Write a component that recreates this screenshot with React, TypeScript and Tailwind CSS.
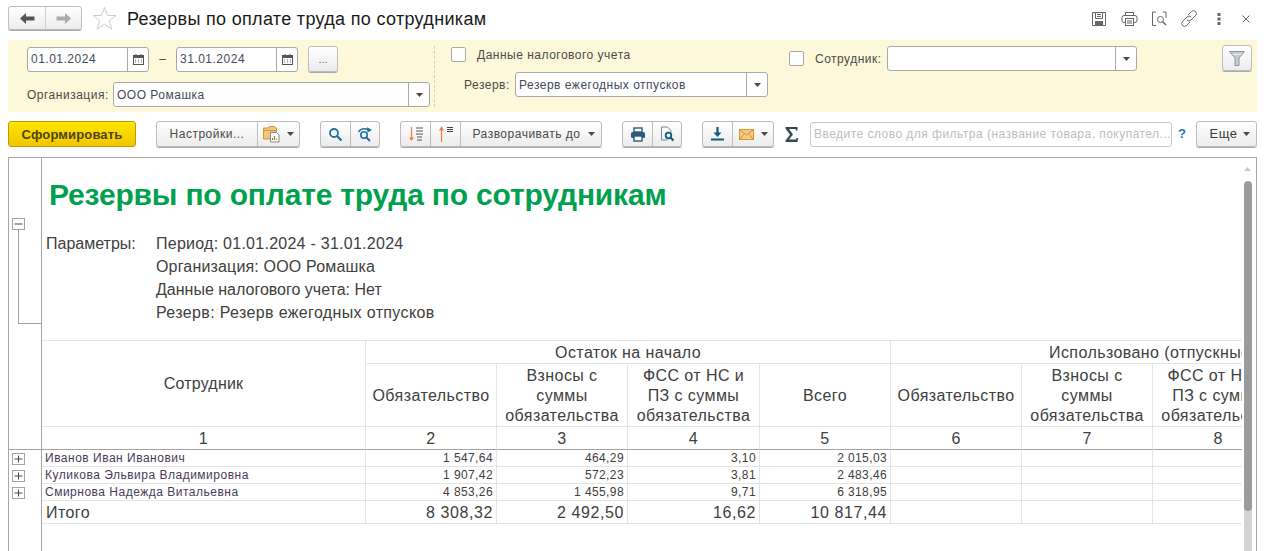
import React from "react";

const F = "[font-family:Liberation_Sans,Arial,sans-serif]";

function Caret() {
  return <svg width="7" height="4" viewBox="0 0 7 4" className="shrink-0"><path d="M0 0h7L3.5 4z" fill="#4a4a4a" /></svg>;
}
function CalIcon() {
  return (
    <svg width="11" height="11" viewBox="0 0 11 11">
      <rect x="0.5" y="1.5" width="10" height="9" fill="#fff" stroke="#555" />
      <rect x="1" y="1" width="9" height="3" fill="#555" />
      <path d="M3 0v2M8 0v2" stroke="#555" />
      <path d="M2 6h1M5 6h1M8 6h1M2 8h1M5 8h1M8 8h1" stroke="#666" />
    </svg>
  );
}
function Field({ w, text, kind, h = "h-[25px]", cls = "" }: { w: string; text?: string; kind: "date" | "select"; h?: string; cls?: string }) {
  return (
    <div className={`${w} ${h} ${cls} flex items-stretch bg-white border border-[#a9a9a9] rounded-[3px] shrink-0`}>
      <div className="flex-1 pl-[3px] flex items-center text-[12px] tracking-[0.5px] text-[#434a5c] whitespace-nowrap overflow-hidden">{text}</div>
      <div className="w-[21px] border-l border-[#a9a9a9] flex items-center justify-center">
        {kind === "date" ? <CalIcon /> : <Caret />}
      </div>
    </div>
  );
}
function Check({ cls = "" }: { cls?: string }) {
  return <div className={`w-[15px] h-[15px] bg-white border border-[#a9a9a9] rounded-[2px] shrink-0 ${cls}`} />;
}
const btn = "bg-gradient-to-b from-white to-[#ececec] border border-[#bdbdbd] rounded-[3px] shadow-[0_1px_0_#a9a9a9]";
function Group({ children, cls = "" }: { children: React.ReactNode; cls?: string }) {
  return <div className={`${btn} h-[26px] flex items-stretch shrink-0 ${cls}`}>{children}</div>;
}
function Seg({ w, children, last, cls = "" }: { w: string; children: React.ReactNode; last?: boolean; cls?: string }) {
  return <div className={`${w} ${cls} flex items-center justify-center gap-[7px] text-[12px] tracking-[0.5px] text-[#4a4a4a] ${last ? "" : "border-r border-[#bdbdbd]"}`}>{children}</div>;
}

const BLUE = "#1f6f9f";
const NAVY = "#2a5b7e";

const SearchI = () => (
  <svg width="15" height="15" viewBox="0 0 15 15" fill="none"><circle cx="6" cy="6" r="4" stroke={BLUE} strokeWidth="1.8" /><path d="M9 9l4.500 4.500" stroke={BLUE} strokeWidth="2.2" /></svg>
);
const SearchNextI = () => (
  <svg width="16" height="15" viewBox="0 0 16 15" fill="none">
    <circle cx="7" cy="8" r="3.2" stroke={BLUE} strokeWidth="1.6" /><path d="M9.500 10.500L13 14" stroke={BLUE} strokeWidth="2" />
    <path d="M1.500 5C3 2 7 .8 11 2.600" stroke={BLUE} strokeWidth="1.5" /><path d="M10 .2L15 3 10.500 5.400z" fill={BLUE} />
  </svg>
);
const SortDownI = () => (
  <svg width="16" height="16" viewBox="0 0 16 16" fill="none">
    <path d="M3.500 1v12" stroke="#ee7f3a" strokeWidth="1.2" /><path d="M1 11.500h5L3.500 15z" fill="#ee7f3a" />
    <path d="M8 2h7M8 5h7M8 8h7M9 11h5M9 14h5" stroke="#555" />
  </svg>
);
const SortUpI = () => (
  <svg width="16" height="16" viewBox="0 0 16 16" fill="none">
    <path d="M3.500 3v13" stroke="#ee7f3a" strokeWidth="1.2" /><path d="M1 4.500h5L3.500 0z" fill="#ee7f3a" />
    <path d="M9 1.500h6M9 3.500h6M9 5.500h6" stroke="#444" />
  </svg>
);
const PrintI = () => (
  <svg width="16" height="15" viewBox="0 0 16 15" fill="none">
    <rect x="4" y="1" width="8" height="4" fill="#fff" stroke={NAVY} strokeWidth="1.4" />
    <rect x="1" y="5" width="14" height="6" rx="1.5" fill={NAVY} />
    <rect x="4" y="9" width="8" height="5" fill="#fff" stroke={NAVY} strokeWidth="1.4" />
  </svg>
);
const PreviewI = () => (
  <svg width="15" height="16" viewBox="0 0 15 16" fill="none">
    <path d="M1.500 1h6l3.500 3.500v2M1.500 1v13h6" stroke="#6d8aa0" strokeWidth="1" />
    <circle cx="8.500" cy="9.500" r="2.800" stroke="#14577f" strokeWidth="1.8" /><path d="M10.500 11.500l3 3" stroke="#14577f" strokeWidth="2.2" />
  </svg>
);
const DownloadI = () => (
  <svg width="15" height="14" viewBox="0 0 15 14" fill="none">
    <path d="M7.500 0v6" stroke="#14577f" strokeWidth="2.2" /><path d="M3.500 5.500h8L7.500 10z" fill="#14577f" /><path d="M1 12.500h13" stroke="#14577f" strokeWidth="2" />
  </svg>
);
const MailI = () => (
  <svg width="15" height="11" viewBox="0 0 15 11" fill="none">
    <rect x="0.5" y="0.5" width="14" height="10" fill="#f5cd82" stroke="#d39a3c" />
    <path d="M.5.5l7 5.500 7-5.500M.5 10.500l5-6M14.500 10.500l-5-6" stroke="#c98f35" />
  </svg>
);
const FolderI = () => (
  <svg width="17" height="18" viewBox="0 0 17 18" fill="none">
    <path d="M.5 3h5l1-1.500h5l1 1.500h1v11H.5z" fill="#efc777" stroke="#c9993f" />
    <path d="M.5 5.500h13.500" stroke="#c9993f" />
    <path d="M7.500 7.500h6l2.500 2.500v7H7.500z" fill="#fff" stroke="#8a8a8a" />
    <path d="M9.500 15v-2" stroke="#d24b3a" strokeWidth="1.2" /><path d="M11.500 15v-4" stroke="#4aa34a" strokeWidth="1.2" /><path d="M13.500 15v-1.500" stroke="#e0a030" strokeWidth="1.2" />
  </svg>
);

function Header() {
  return (
    <div className="h-[40px] flex items-start shrink-0">
      <div className={`${btn} ml-[8px] mt-[6px] w-[74px] h-[24px] flex`}>
        <div className="w-[37px] border-r border-[#cfcfcf] flex items-center justify-center">
          <svg width="15" height="11" viewBox="0 0 15 11"><path d="M0 5.500L6 0v3.500h8.500v4H6V11z" fill="#555" /></svg>
        </div>
        <div className="flex-1 flex items-center justify-center">
          <svg width="15" height="11" viewBox="0 0 15 11"><path d="M15 5.500L9 0v3.500H.5v4H9V11z" fill="#ababab" /></svg>
        </div>
      </div>
      <svg className="ml-[10px] mt-[6px]" width="25" height="25" viewBox="0 0 25 25" fill="none">
        <path d="M12.500 1.500l3 8h8.500l-6.800 5.400 2.600 8.400-7.300-5-7.300 5 2.600-8.400L1 9.500h8.500z" stroke="#cdcdcd" strokeWidth="1" fill="#fff" />
      </svg>
      <div className="ml-[10px] mt-[8px] text-[18px] tracking-[0.32px] leading-[22px] text-[#1a1a1a] whitespace-nowrap">Резервы по оплате труда по сотрудникам</div>
      <div className="ml-auto mt-[10px] mr-[20px] flex items-center">
        <svg width="16" height="16" viewBox="0 0 16 16" fill="none" stroke="#666">
          <path d="M1.500 1.500h13v13h-13z" /><path d="M4.500 1.500v6h7v-6M6 3.500h4M6 5.500h4" /><rect x="4.500" y="10.500" width="7" height="4" fill="#666" />
        </svg>
        <svg className="ml-[14px]" width="17" height="16" viewBox="0 0 17 16" fill="none" stroke="#666">
          <path d="M4.500 4V1.500h8V4" /><rect x="1" y="4.500" width="15" height="7" rx="2" /><rect x="4.500" y="7.500" width="8" height="7" fill="#fff" /><path d="M6 10h5M6 12h5" />
        </svg>
        <svg className="ml-[13px]" width="17" height="16" viewBox="0 0 17 16" fill="none" stroke="#666">
          <path d="M5 1H1.500v13.500H5M12 1h3v6" /><circle cx="9.500" cy="8.500" r="3" /><path d="M11.500 10.500l3.500 3.500" strokeWidth="1.4" />
        </svg>
        <svg className="ml-[13px]" width="17" height="17" viewBox="0 0 17 17" fill="none" stroke="#666">
          <path d="M7 5l3.500-3.500a2.800 2.800 0 0 1 4 4L10 10a2.800 2.800 0 0 1-4 0" />
          <path d="M10 7a2.800 2.800 0 0 0-4 0L1.500 11.500a2.800 2.800 0 0 0 4 4L9 12" />
        </svg>
        <svg className="ml-[19px]" width="4" height="12" viewBox="0 0 4 12" fill="#666"><rect x="0.5" y="0" width="3" height="3" /><rect x="0.5" y="4.500" width="3" height="3" /><rect x="0.5" y="9" width="3" height="3" /></svg>
        <svg className="ml-[21px]" width="8" height="8" viewBox="0 0 8 8" stroke="#666" fill="none"><path d="M.5.5l7 7M7.500.5l-7 7" /></svg>
      </div>
    </div>
  );
}

function FilterPanel() {
  const label = "text-[12px] tracking-[0.5px] text-[#4a4a4a] whitespace-nowrap";
  return (
    <div className="ml-[8px] mr-[13px] h-[72px] bg-[#fdf8d9] flex items-start shrink-0">
      <div className="ml-[19px] mt-[6px] w-[403px]">
        <div className="flex items-center h-[26px]">
          <Field w="w-[122px]" text="01.01.2024" kind="date" />
          <span className="w-[27px] text-center text-[12px] text-[#4a4a4a]">–</span>
          <Field w="w-[122px]" text="31.01.2024" kind="date" />
          <div className={`${btn} ml-[10px] w-[30px] h-[26px] flex items-center justify-center text-[11px] text-[#666] shrink-0`}>...</div>
        </div>
        <div className="flex items-center mt-[10px]">
          <span className={`${label} w-[86px]`}>Организация:</span>
          <Field w="w-[317px]" text="ООО Ромашка" kind="select" />
        </div>
      </div>
      <div className="ml-[4px] mt-[6px] h-[61px] border-l border-dashed border-[#cfcfcf]" />
      <div className="ml-[16px] mt-[7px] w-[317px]">
        <div className="flex items-center h-[15px]">
          <Check />
          <span className={`${label} ml-[11px]`}>Данные налогового учета</span>
        </div>
        <div className="flex items-center mt-[10px] ml-[13px]">
          <span className={`${label} w-[51px]`}>Резерв:</span>
          <Field w="w-[253px]" text="Резерв ежегодных отпусков" kind="select" />
        </div>
      </div>
      <div className="ml-[21px] mt-[6px] flex items-center">
        <Check />
        <span className={`${label} ml-[11px] w-[72px]`}>Сотрудник:</span>
        <Field w="w-[250px]" kind="select" />
      </div>
      <div className={`${btn} ml-auto mr-[5px] mt-[5px] w-[30px] h-[26px] flex items-center justify-center`}>
        <svg width="16" height="15" viewBox="0 0 16 15" fill="none"><path d="M.5.5h15L10 7v7.500H6V7z" fill="#c4ccd2" stroke="#8a99a4" /><path d="M4 3.500h8" stroke="#eef" /></svg>
      </div>
    </div>
  );
}

function Toolbar() {
  return (
    <div className="ml-[8px] mr-[13px] mt-[9px] h-[26px] flex items-center shrink-0">
      <div className="w-[128px] h-[26px] pt-[1px] rounded-[3px] border border-[#b79a10] bg-gradient-to-b from-[#ffe600] to-[#f2c500] flex items-center justify-center text-[13px] tracking-[0.15px] font-bold text-[#4e4413] shrink-0">Сформировать</div>
      <Group cls="ml-[20px]">
        <Seg w="w-[101px]">Настройки...</Seg>
        <Seg w="w-[41px]" last><FolderI /><Caret /></Seg>
      </Group>
      <Group cls="ml-[20px]">
        <Seg w="w-[30px]"><SearchI /></Seg>
        <Seg w="w-[28px]" last><SearchNextI /></Seg>
      </Group>
      <Group cls="ml-[20px]">
        <Seg w="w-[30px]"><SortDownI /></Seg>
        <Seg w="w-[30px]"><SortUpI /></Seg>
        <Seg w="w-[140px]" cls="pl-[5px]" last>Разворачивать до<Caret /></Seg>
      </Group>
      <Group cls="ml-[20px]">
        <Seg w="w-[30px]"><PrintI /></Seg>
        <Seg w="w-[28px]" last><PreviewI /></Seg>
      </Group>
      <Group cls="ml-[20px]">
        <Seg w="w-[30px]"><DownloadI /></Seg>
        <Seg w="w-[40px]" last><MailI /><Caret /></Seg>
      </Group>
      <svg className="ml-[11px] shrink-0" width="13" height="15" viewBox="0 0 13 15"><path d="M.5 0H12.500V3.500H11L10.500 2H4L8 7.500 4 12.500H11L11.500 11H13L12.500 15H.5V13.500L5 7.800.5 1.500z" fill="#37474f" /></svg>
      <div className="ml-[12px] w-[362px] h-[25px] bg-white border border-[#c9c9c9] rounded-[3px] flex items-center pl-[3px] text-[12px] tracking-[0.47px] text-[#bdbdbd] whitespace-nowrap overflow-hidden shrink-0">Введите слово для фильтра (название товара, покупател...</div>
      <span className="ml-[6px] w-[18px] text-[13px] font-bold text-[#1f79b8]">?</span>
      <div className={`${btn} w-[61px] h-[26px] pl-[7px] flex items-center justify-center gap-[6px] text-[13px] tracking-[0.5px] text-[#3d3d3d] shrink-0 ml-auto`}>Еще<Caret /></div>
    </div>
  );
}

const line = "border-r border-b border-[#e4e4e4]";
const rows = [
  ["Иванов Иван Иванович", "1 547,64", "464,29", "3,10", "2 015,03"],
  ["Куликова Эльвира Владимировна", "1 907,42", "572,23", "3,81", "2 483,46"],
  ["Смирнова Надежда Витальевна", "4 853,26", "1 455,98", "9,71", "6 318,95"],
];
const totals = ["8 308,32", "2 492,50", "16,62", "10 817,44"];
const widths = ["w-[324px]", "w-[131px]", "w-[131px]", "w-[132px]", "w-[131px]", "w-[131px]", "w-[131px]", "w-[131px]", "w-[131px]"];

function Sub() {
  return (
    <>
      <td className={`${line} pt-[1px] text-center align-middle`}>Обязательство</td>
      <td className={`${line} pt-[1px] text-center align-middle`}>Взносы с<br />суммы<br />обязательства</td>
      <td className={`${line} pt-[1px] text-center align-middle`}>ФСС от НС и<br />ПЗ с суммы<br />обязательства</td>
    </>
  );
}

function Table() {
  return (
    <table className="table-fixed border-separate border-spacing-0 w-[1373px] text-[16px] tracking-[0.42px] leading-[20px] text-[#404040] border-t border-[#e4e4e4]">
      <colgroup>{widths.map((w, i) => <col key={i} className={w} />)}</colgroup>
      <tbody>
        <tr className="h-[23px]">
          <td rowSpan={2} className={`${line} tracking-[0.2px] text-center align-middle`}>Сотрудник</td>
          <td colSpan={4} className={`${line} pt-[1px] text-center`}>Остаток на начало</td>
          <td colSpan={4} className={`${line} pt-[1px] text-center whitespace-nowrap`}>Использовано (отпускные)</td>
        </tr>
        <tr className="h-[63px]">
          <Sub />
          <td className={`${line} pt-[1px] text-center`}>Всего</td>
          <Sub />
          <td className={line} />
        </tr>
        <tr className="h-[23px]">
          {[1, 2, 3, 4, 5, 6, 7, 8, 9].map((n) => (
            <td key={n} className={`${line} pt-[1px] border-b-[#a3a3a3] text-center`}>{n}</td>
          ))}
        </tr>
        {rows.map((r) => (
          <tr key={r[0]} className="h-[17px] text-[12px] tracking-[0.4px] leading-[14px]">
            <td className={`${line} pl-[3px] text-[#4a3a5a] tracking-[0.5px] whitespace-nowrap`}>{r[0]}</td>
            {r.slice(1).map((v, i) => <td key={i} className={`${line} text-right pr-[3px]`}>{v}</td>)}
            {[0, 1, 2, 3].map((i) => <td key={i} className={line} />)}
          </tr>
        ))}
        <tr className="h-[23px] tracking-[0.6px]">
          <td className={`${line} pl-[4px] pt-[1px] tracking-[0.4px]`}>Итого</td>
          {totals.map((v, i) => <td key={i} className={`${line} text-right pr-[3px] pt-[1px]`}>{v}</td>)}
          {[0, 1, 2, 3].map((i) => <td key={i} className={line} />)}
        </tr>
      </tbody>
    </table>
  );
}

function TreeBox({ plus, cls = "" }: { plus?: boolean; cls?: string }) {
  return (
    <svg className={`block ${cls}`} width="13" height="12" viewBox="0 0 13 12" fill="none">
      <rect x="0.5" y="0.5" width="12" height="11" fill="#fff" stroke="#a3a3a3" />
      <path d="M2.500 6h8" stroke="#444" />
      {plus && <path d="M6.500 2.500v7" stroke="#444" />}
    </svg>
  );
}

function Report() {
  return (
    <div className="ml-[8px] mr-[13px] mt-[10px] flex-1 min-h-0 border-l border-t border-r border-[#a6a6a6] flex overflow-hidden">
      <div className="w-[33px] shrink-0 border-r border-[#a6a6a6]">
        <TreeBox cls="ml-[3px] mt-[60px]" />
        <div className="ml-[9px] w-[23px] h-[94px] border-l border-b border-[#a3a3a3]" />
        <div className="mt-[125px] border-t border-[#a3a3a3] pt-[3px]">
          <TreeBox plus cls="ml-[3px]" />
          <TreeBox plus cls="ml-[3px] mt-[5px]" />
          <TreeBox plus cls="ml-[3px] mt-[5px]" />
        </div>
      </div>
      <div className="w-[1200px] shrink-0 overflow-hidden">
        <div className="pl-[7px] pt-[18px] h-[74px] text-[30px] tracking-[-0.18px] leading-[38px] font-bold text-[#00a14e] whitespace-nowrap">Резервы по оплате труда по сотрудникам</div>
        <div className="flex pl-[4px] h-[108px] text-[16px] leading-[23px] text-[#404040]">
          <div className="w-[110px]">Параметры:</div>
          <div>
            <div className="tracking-[0.26px]">Период: 01.01.2024 - 31.01.2024</div>
            <div className="tracking-[0.17px]">Организация: ООО Ромашка</div>
            <div>Данные налогового учета: Нет</div>
            <div className="tracking-[0.36px]">Резерв: Резерв ежегодных отпусков</div>
          </div>
        </div>
        <Table />
      </div>
      <div className="flex-1 flex flex-col items-center pr-[3px]">
        <svg className="mt-[9px]" width="7" height="4" viewBox="0 0 7 4"><path d="M0 4h7L3.500 0z" fill="#c9c9c9" /></svg>
        <div className="mt-[10px] w-[8px] flex-1 bg-[#d3d3d3] rounded-t-[4px] overflow-hidden">
          <div className="h-[330px] bg-[#9b9b9b] rounded-[4px]" />
        </div>
      </div>
    </div>
  );
}

export default function App() {
  return (
    <div className={`${F} h-[551px] w-[1270px] bg-white overflow-hidden flex flex-col`}>
      <Header />
      <FilterPanel />
      <Toolbar />
      <Report />
    </div>
  );
}
